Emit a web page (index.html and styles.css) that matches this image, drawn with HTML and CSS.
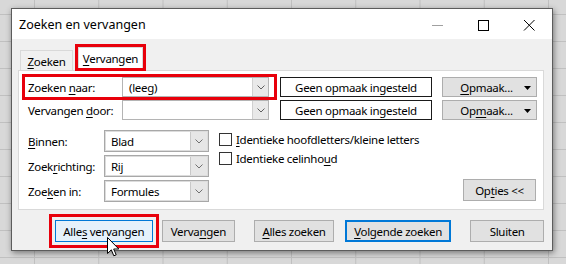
FILE: index.html
```
<!DOCTYPE html>
<html lang="nl">
<head>
<meta charset="utf-8">
<title>Zoeken en vervangen</title>
<link rel="stylesheet" href="styles.css">
</head>
<body>
<div class="dialog">
  <div class="titlebar">
    <span class="title">Zoeken en vervangen</span>
    <span class="ctl"><svg width="12" height="12" viewBox="0 0 12 12"><path d="M1 6.5H12" stroke="#a0a0a0" stroke-width="1"/></svg></span>
    <span class="ctl"><svg width="12" height="12" viewBox="0 0 12 12"><rect x="1.5" y="1.5" width="10" height="10" fill="none" stroke="#000" stroke-width="1"/></svg></span>
    <span class="ctl"><svg width="12" height="12" viewBox="0 0 12 12"><path d="M1 1L11.5 11.5M11.5 1L1 11.5" stroke="#000" stroke-width="1"/></svg></span>
  </div>
  <div class="body">
    <div class="tabs">
      <span class="tab"><span><u>Z</u>oeken</span></span>
      <span class="tab active hl"><span><u>V</u>ervangen</span></span>
    </div>
    <div class="panel">
      <div class="toprow">
        <div class="field hl">
          <span class="lbl">Zoeken <u>n</u>aar:</span>
          <span class="combo c-top"><span class="val">(leeg)</span><span class="drop"><svg width="8" height="5" viewBox="0 0 8 5"><path d="M0.5 0.5L4 4L7.5 0.5" fill="none" stroke="#606060"/></svg></span></span>
        </div>
        <span class="fmt"><span>Geen opmaak ingesteld</span></span>
        <span class="btn opm"><span><u>O</u>pmaak...</span><svg class="tri" width="7" height="4" viewBox="0 0 7 4"><path d="M0 0H7L3.5 4Z" fill="#000"/></svg></span>
      </div>
      <div class="toprow second">
        <div class="field">
          <span class="lbl">Vervangen <u>d</u>oor:</span>
          <span class="combo c-top"><span class="val"></span><span class="drop"><svg width="8" height="5" viewBox="0 0 8 5"><path d="M0.5 0.5L4 4L7.5 0.5" fill="none" stroke="#606060"/></svg></span></span>
        </div>
        <span class="fmt"><span>Geen opmaak ingesteld</span></span>
        <span class="btn opm"><span>Op<u>m</u>aak...</span><svg class="tri" width="7" height="4" viewBox="0 0 7 4"><path d="M0 0H7L3.5 4Z" fill="#000"/></svg></span>
      </div>
      <div class="lower">
        <div class="opts">
          <span class="lbl2"><u>B</u>innen:</span>
          <span class="combo c-low"><span class="val">Blad</span><span class="drop"><svg width="8" height="5" viewBox="0 0 8 5"><path d="M0.5 0.5L4 4L7.5 0.5" fill="none" stroke="#707070"/></svg></span></span>
          <span class="lbl2">Zoek<u>r</u>ichting:</span>
          <span class="combo c-low"><span class="val">Rij</span><span class="drop"><svg width="8" height="5" viewBox="0 0 8 5"><path d="M0.5 0.5L4 4L7.5 0.5" fill="none" stroke="#707070"/></svg></span></span>
          <span class="lbl2">Zoe<u>k</u>en in:</span>
          <span class="combo c-low"><span class="val">Formules</span><span class="drop"><svg width="8" height="5" viewBox="0 0 8 5"><path d="M0.5 0.5L4 4L7.5 0.5" fill="none" stroke="#707070"/></svg></span></span>
        </div>
        <div class="checks">
          <label class="chk"><span class="box"></span><span><u>I</u>dentieke hoofdletters/kleine letters</span></label>
          <label class="chk"><span class="box"></span><span>Identieke celinho<u>u</u>d</span></label>
        </div>
        <span class="btn opties"><span>Op<u>t</u>ies &lt;&lt;</span></span>
      </div>
    </div>
    <div class="actions">
      <span class="btn b-all hlo"><span>Alle<u>s</u> vervangen</span></span>
      <span class="btn b-rep"><span>Verva<u>n</u>gen</span></span>
      <span class="btn b-find"><span><u>A</u>lles zoeken</span></span>
      <span class="btn b-next"><span><u>V</u>olgende zoeken</span></span>
      <span class="btn b-close"><span>Sluiten</span></span>
    </div>
  </div>
  <svg class="cursor" width="13" height="21" viewBox="0 0 13 21"><path d="M0.5 0.5V16.5L4.3 12.8L6.8 18.8L9.2 17.8L6.7 12H11.8Z" fill="#fff" stroke="#000" stroke-width="1" stroke-linejoin="miter"/></svg>
</div>
</body>
</html>
```
FILE: styles.css
```
* { box-sizing: border-box; }
html, body { margin: 0; padding: 0; }
body {
  width: 566px;
  height: 264px;
  overflow: hidden;
  background-color: #d8d8d8;
  background-image:
    linear-gradient(to right, #c0c0c0 1px, transparent 1px),
    linear-gradient(to bottom, #c0c0c0 1px, transparent 1px);
  background-size: 64.25px 27px;
  background-position: 34px 14px;
  padding: 8px 0 0 11px;
  font-family: "Noto Sans", "Open Sans", sans-serif;
  font-size: 11.5px;
  letter-spacing: -0.3px;
  color: #000;
}
u { text-decoration: underline; text-underline-offset: 2px; }
.dialog {
  position: relative;
  width: 542px;
  height: 243px;
  border: 1px solid #5c5c5c;
  background: #f0f0f0;
  box-shadow: 1px 2px 6px rgba(0,0,0,0.45);
  display: flex;
  flex-direction: column;
}
.titlebar {
  height: 30px;
  background: #fff;
  display: flex;
  align-items: center;
  padding-left: 7px;
  flex: none;
}
.title { flex: 1; font-size: 12.5px; letter-spacing: 0; padding-top: 1px; }
.ctl {
  width: 46px;
  height: 30px;
  display: flex;
  align-items: center;
  justify-content: center;
  padding-top: 2px;
}
.body {
  padding: 0 8px 0 6px;
  flex: 1;
}
.tabs {
  display: flex;
  align-items: flex-end;
  height: 31px;
  padding-left: 2px;
}
.tab {
  height: 20px;
  width: 53px;
  border: 1px solid #d9d9d9;
  border-bottom: none;
  display: flex;
  align-items: center;
  justify-content: center;
  padding-top: 1px;
}
.tab.active {
  height: 21px;
  width: 65px;
  margin-left: 5px;
  margin-bottom: 2px;
  background: #fff;
}
.hl { outline: 3px solid #e8000b; }
.hlo { outline: 3px solid #e8000b; outline-offset: 3px; }
.panel {
  height: 140px;
  background: #fff;
  border: 1px solid #d9d9d9;
  padding: 6px 0 0 6px;
}
.toprow {
  display: flex;
  align-items: center;
  height: 20px;
}
.toprow.second { margin-top: 3px; }
.field {
  width: 249px;
  height: 20px;
  display: flex;
  align-items: center;
  padding-left: 3px;
}
.lbl { flex: 1; }
.combo {
  display: flex;
  background: #fff;
  border: 1px solid #b4b4b4;
}
.combo .val { flex: 1; padding-left: 6px; display: flex; align-items: center; }
.combo .drop {
  width: 16px;
  display: flex;
  align-items: center;
  justify-content: center;
  background: #e9e9e9;
  border-left: 1px solid #d0d0d0;
}
.c-top { width: 147px; height: 20px; margin-right: 5px; }
.fmt {
  margin-left: 6px;
  width: 152px;
  height: 20px;
  border: 1px solid #1a1a1a;
  display: flex;
  align-items: center;
  justify-content: center;
}
.btn {
  background: #e1e1e1;
  border: 1px solid #adadad;
  display: flex;
  align-items: center;
  justify-content: center;
}
.opm {
  margin-left: 10px;
  width: 95px;
  height: 20px;
  position: relative;
  padding-right: 6px;
}
.opm .tri { position: absolute; right: 5px; top: 8px; }
.lower {
  display: flex;
  margin-top: 10px;
  height: 72px;
}
.opts {
  display: grid;
  grid-template-columns: 76px 105px;
  grid-auto-rows: 22px;
  row-gap: 3px;
  margin-left: 3px;
  align-items: center;
}
.c-low {
  width: 105px;
  height: 22px;
  border: 1px solid #a8a8a8;
  box-shadow: inset 0 0 0 1px #dcdcdc;
}
.c-low .drop { width: 17px; border-left: 1px solid #c8c8c8; background: #e6e6e6; margin: 1px 1px 1px 0; }
.checks {
  margin-left: 10px;
  padding-top: 2px;
  display: flex;
  flex-direction: column;
  gap: 5px;
}
.chk { display: flex; align-items: center; height: 14px; }
.chk .box {
  width: 13px;
  height: 13px;
  border: 1px solid #333;
  background: #fff;
  margin-right: 4px;
}
.opties {
  margin-left: auto;
  margin-right: 7px;
  align-self: flex-end;
  margin-bottom: 1px;
  width: 73px;
  height: 22px;
}
.actions {
  display: flex;
  margin-top: 10px;
  padding-left: 37px;
  height: 22px;
}
.actions .btn { height: 22px; }
.b-all { width: 98px; background: #e5f1fb; border-color: #0078d7; }
.b-rep { width: 74px; margin-left: 9px; }
.b-find { width: 80px; margin-left: 19px; }
.b-next { width: 107px; margin-left: 11px; border: 2px solid #0078d7; }
.b-close { width: 74px; margin-left: 19px; }
.cursor { position: absolute; left: 95px; top: 228px; }
```
